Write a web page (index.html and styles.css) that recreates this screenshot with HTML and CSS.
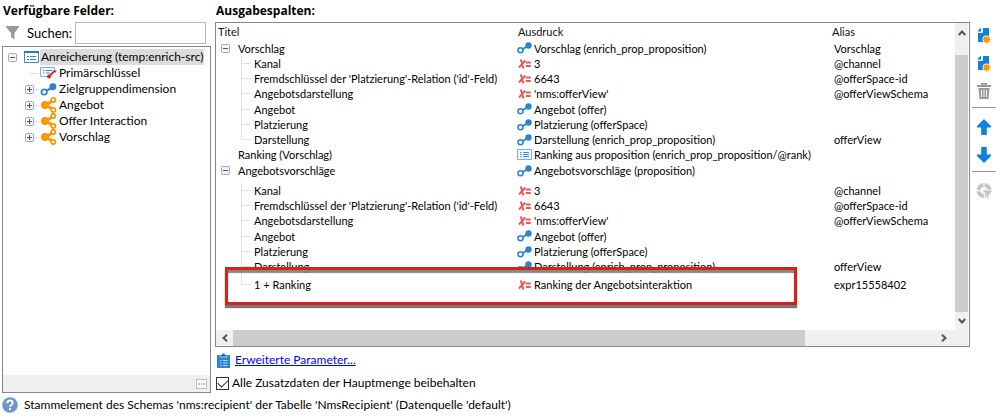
FILE: index.html
```html
<!DOCTYPE html>
<html lang="de">
<head>
<meta charset="utf-8">
<title>Anreicherung</title>
<link rel="stylesheet" href="styles.css">
</head>
<body>
<svg class="defs" aria-hidden="true">
  <symbol id="minus" viewBox="0 0 9 9"><rect x=".5" y=".5" width="8" height="8" rx="1" fill="#f4f4f4" stroke="#a8a8a8"/><path d="M2 4.500h5" stroke="#3c55a8"/></symbol>
  <symbol id="plus" viewBox="0 0 9 9"><rect x=".5" y=".5" width="8" height="8" rx="1" fill="#f4f4f4" stroke="#a8a8a8"/><path d="M2 4.500h5M4.500 2v5" stroke="#3c55a8"/></symbol>
  <symbol id="link" viewBox="0 0 15 12"><path d="M5 7.500 11 4" stroke="#2b84d3" stroke-width="2"/><circle cx="3.500" cy="8.300" r="2.500" fill="#fff" stroke="#2b84d3" stroke-width="1.600"/><circle cx="11.500" cy="3.500" r="3.200" fill="#2b84d3"/></symbol>
  <symbol id="list" viewBox="0 0 15 11"><rect x=".5" y=".5" width="14" height="10" fill="#f4faff" stroke="#78b4e6"/><path d="M3 3.500h1.500M6 3.500h6M3 5.500h1.500M6 5.500h6M3 7.500h1.500M6 7.500h6" stroke="#3b8fdb"/></symbol>
  <symbol id="var" viewBox="0 0 15 12"><path d="M3 2.500h1.300L6 9.500h1.300M8.300 2.500 2 9.500" fill="none" stroke="#e85a5a" stroke-width="1.900"/><path d="M8.800 4.500h5M8.800 8h5" stroke="#e85a5a" stroke-width="1.900"/></symbol>
  <symbol id="schema" viewBox="0 0 15 12"><rect x=".5" y=".5" width="14" height="11" fill="#fff" stroke="#3b8fdb"/><path d="M0 1h15" stroke="#1b7fd4" stroke-width="2"/><path d="M3 5.500h2M6 5.500h6M3 8.500h2M6 8.500h6" stroke="#2b84d3"/></symbol>
  <symbol id="key" viewBox="0 0 17 14"><path d="M14.500 6V1.500H.5v9H8" fill="#f4faff" stroke="#78b4e6"/><path d="M3 4.500h1.500M6 4.500h6M3 7h1.500M6 7h4" stroke="#3b8fdb"/><path d="m8.500 11 6-6 1.500 1" fill="none" stroke="#e02020" stroke-width="1.800"/><circle cx="9" cy="10.500" r="2" fill="#e02020"/></symbol>
  <symbol id="share" viewBox="0 0 17 16"><path d="M5 8.500 13 3.500M5 7.500l8 5" fill="none" stroke="#ff9500" stroke-width="2.800"/><circle cx="5" cy="8" r="4" fill="#ff9500"/><circle cx="13.300" cy="3" r="2.200" fill="#fff" stroke="#ff9500" stroke-width="1.700"/><circle cx="13.300" cy="13" r="2.200" fill="#fff" stroke="#ff9500" stroke-width="1.700"/></symbol>
  <symbol id="new" viewBox="0 0 14 17"><path d="M5 1h7v9.500H7.500L6 15H1V6h4z" fill="#0a84dc"/><path d="M1 4.500V3.500L3.500 1H4v3.500z" fill="#0a84dc"/><path d="M5.500 0v5.500H0" fill="none" stroke="#fff"/><circle cx="9.500" cy="12.500" r="4" fill="#fff"/><path d="M9.500 8.500v8M5.500 12.500h8M6.700 9.700l5.600 5.600M12.300 9.700l-5.600 5.600" stroke="#ff9500" stroke-width="1.300"/><circle cx="9.500" cy="12.500" r="2.700" fill="#ff9500"/></symbol>
  <symbol id="up" viewBox="0 0 14 16"><path d="M7 0l7 7v1.500H9.800V16H4.200V8.500H0V7z" fill="#0a84dc"/></symbol>
</svg>

<div class="app">
  <main class="columns">
    <section class="fields">
      <h2>Verfügbare Felder:</h2>
      <div class="search">
        <svg width="13" height="14" viewBox="0 0 13 14"><path d="M0 0h13v1L8.500 7v6.500L5 11V7L0 1z" fill="#999"/></svg>
        <label for="q">Suchen:</label>
        <input id="q" type="text">
      </div>
      <div class="tree">
        <ul>
          <li class="root"><svg width="9" height="9"><use href="#minus"/></svg><svg class="schema" width="15" height="12"><use href="#schema"/></svg><span class="selected">Anreicherung (temp:enrich-src)</span></li>
          <li><i class="gap"></i><i class="dash"></i><svg width="17" height="14"><use href="#key"/></svg>Primärschlüssel</li>
          <li><svg width="9" height="9"><use href="#plus"/></svg><i class="dash short"></i><svg width="17" height="13"><use href="#link"/></svg>Zielgruppendimension</li>
          <li><svg width="9" height="9"><use href="#plus"/></svg><i class="dash short"></i><svg width="17" height="16"><use href="#share"/></svg>Angebot</li>
          <li><svg width="9" height="9"><use href="#plus"/></svg><i class="dash short"></i><svg width="17" height="16"><use href="#share"/></svg>Offer Interaction</li>
          <li><svg width="9" height="9"><use href="#plus"/></svg><i class="dash short"></i><svg width="17" height="16"><use href="#share"/></svg>Vorschlag</li>
        </ul>
        <div class="tree-foot"><button type="button" aria-label="Mehr"><svg width="11" height="10" viewBox="0 0 11 10"><rect x=".5" y=".5" width="10" height="9" fill="#fff" stroke="#bbb"/><path d="M2 5h2M5 5h1M7 5h2" stroke="#888"/></svg></button></div>
      </div>
    </section>

    <section class="output">
      <h2>Ausgabespalten:</h2>
      <div class="grid">
        <div class="view">
          <table>
            <colgroup><col class="c1"><col class="c2"><col></colgroup>
            <thead><tr><th>Titel</th><th>Ausdruck</th><th>Alias</th></tr></thead>
            <tbody>
              <tr class="group"><td><div class="cell top"><svg width="9" height="9"><use href="#minus"/></svg>Vorschlag</div></td><td><div class="cell"><svg width="15" height="12"><use href="#link"/></svg>Vorschlag (enrich_prop_proposition)</div></td><td>Vorschlag</td></tr>
              <tr><td><div class="cell child"><i class="stem"></i>Kanal</div></td><td><div class="cell"><svg width="15" height="12"><use href="#var"/></svg>3</div></td><td>@channel</td></tr>
              <tr><td><div class="cell child"><i class="stem"></i>Fremdschlüssel der 'Platzierung'-Relation ('id'-Feld)</div></td><td><div class="cell"><svg width="15" height="12"><use href="#var"/></svg>6643</div></td><td>@offerSpace-id</td></tr>
              <tr><td><div class="cell child"><i class="stem"></i>Angebotsdarstellung</div></td><td><div class="cell"><svg width="15" height="12"><use href="#var"/></svg>'nms:offerView'</div></td><td>@offerViewSchema</td></tr>
              <tr class="mid"><td><div class="cell child"><i class="stem"></i>Angebot</div></td><td><div class="cell"><svg width="15" height="12"><use href="#link"/></svg>Angebot (offer)</div></td><td></td></tr>
              <tr><td><div class="cell child"><i class="stem"></i>Platzierung</div></td><td><div class="cell"><svg width="15" height="12"><use href="#link"/></svg>Platzierung (offerSpace)</div></td><td></td></tr>
              <tr><td><div class="cell child"><i class="stem last"></i>Darstellung</div></td><td><div class="cell"><svg width="15" height="12"><use href="#link"/></svg>Darstellung (enrich_prop_proposition)</div></td><td>offerView</td></tr>
              <tr><td><div class="cell plain">Ranking (Vorschlag)</div></td><td><div class="cell"><svg width="15" height="11"><use href="#list"/></svg>Ranking aus proposition (enrich_prop_proposition/@rank)</div></td><td></td></tr>
              <tr class="group tall"><td><div class="cell top"><svg width="9" height="9"><use href="#minus"/></svg>Angebotsvorschläge</div></td><td><div class="cell"><svg width="15" height="12"><use href="#link"/></svg>Angebotsvorschläge (proposition)</div></td><td></td></tr>
              <tr><td><div class="cell child"><i class="stem"></i>Kanal</div></td><td><div class="cell"><svg width="15" height="12"><use href="#var"/></svg>3</div></td><td>@channel</td></tr>
              <tr><td><div class="cell child"><i class="stem"></i>Fremdschlüssel der 'Platzierung'-Relation ('id'-Feld)</div></td><td><div class="cell"><svg width="15" height="12"><use href="#var"/></svg>6643</div></td><td>@offerSpace-id</td></tr>
              <tr><td><div class="cell child"><i class="stem"></i>Angebotsdarstellung</div></td><td><div class="cell"><svg width="15" height="12"><use href="#var"/></svg>'nms:offerView'</div></td><td>@offerViewSchema</td></tr>
              <tr class="mid"><td><div class="cell child"><i class="stem"></i>Angebot</div></td><td><div class="cell"><svg width="15" height="12"><use href="#link"/></svg>Angebot (offer)</div></td><td></td></tr>
              <tr><td><div class="cell child"><i class="stem"></i>Platzierung</div></td><td><div class="cell"><svg width="15" height="12"><use href="#link"/></svg>Platzierung (offerSpace)</div></td><td></td></tr>
              <tr><td><div class="cell child"><i class="stem"></i>Darstellung</div></td><td><div class="cell"><svg width="15" height="12"><use href="#link"/></svg>Darstellung (enrich_prop_proposition)</div></td><td>offerView</td></tr>
              <tr class="rank"><td><div class="cell child"><i class="stem last"></i>1 + Ranking</div></td><td><div class="cell"><svg width="15" height="12"><use href="#var"/></svg>Ranking der Angebotsinteraktion</div></td><td>expr15558402</td></tr>
            </tbody>
          </table>
          <div class="marker"></div>
        </div>
        <div class="vbar">
          <button type="button" aria-label="Nach oben blättern"><svg width="8" height="6" viewBox="0 0 8 6"><path d="M.8 5 4 1.500 7.200 5" fill="none" stroke="#555" stroke-width="2"/></svg></button>
          <div class="vthumb"></div>
          <button type="button" aria-label="Nach unten blättern"><svg width="8" height="6" viewBox="0 0 8 6"><path d="M.8 1 4 4.500 7.200 1" fill="none" stroke="#555" stroke-width="2"/></svg></button>
        </div>
        <div class="hbar">
          <button type="button" aria-label="Nach links blättern"><svg width="6" height="8" viewBox="0 0 6 8"><path d="M5 .8 1.500 4 5 7.200" fill="none" stroke="#555" stroke-width="2"/></svg></button>
          <div class="hthumb"></div>
          <button type="button" aria-label="Nach rechts blättern"><svg width="6" height="8" viewBox="0 0 6 8"><path d="M1 .8 4.500 4 1 7.200" fill="none" stroke="#555" stroke-width="2"/></svg></button>
        </div>
      </div>
      <div class="advanced">
        <svg width="13" height="16" viewBox="0 0 13 16"><path d="M0 3h13v13H0z" fill="#2b84d3"/><path d="M3 2.500h2a1.500 1.500 0 0 1 3 0h2V5H3z" fill="#1c6fba" stroke="#fff" stroke-width=".6"/><path d="M3 8.500h1.500M6 8.500h4.500M3 11h1.500M6 11h4.500M3 13.500h1.500M6 13.500h4.500" stroke="#b7dcfa"/></svg>
        <a href="#">Erweiterte Parameter...</a>
      </div>
      <label class="keep"><input type="checkbox" checked>Alle Zusatzdaten der Hauptmenge beibehalten</label>
    </section>

    <nav class="tools">
      <button type="button" aria-label="Hinzufügen"><svg width="14" height="17"><use href="#new"/></svg></button>
      <button type="button" aria-label="Ausdruck hinzufügen"><svg width="14" height="17"><use href="#new"/></svg></button>
      <button type="button" aria-label="Löschen"><svg width="14" height="16" viewBox="0 0 14 16"><path d="M5 2V.8h4V2" fill="none" stroke="#8c8c8c" stroke-width="1.500"/><path d="M0 2h14v2H0zM1.500 5h11l-1 11h-9z" fill="#999"/><path d="M4.500 7v7M7 7v7M9.500 7v7" stroke="#fff"/></svg></button>
      <hr>
      <button type="button" aria-label="Nach oben"><svg width="14" height="16"><use href="#up"/></svg></button>
      <button type="button" aria-label="Nach unten"><svg class="flip" width="14" height="16"><use href="#up"/></svg></button>
      <hr>
      <button type="button" aria-label="Filter"><svg width="16" height="16" viewBox="0 0 16 16"><circle cx="8" cy="7.500" r="5.500" fill="none" stroke="#c4c4c4" stroke-width="4" stroke-dasharray="7.500 1.140"/><path d="M6.500 7H16v1.500L13 12v4l-2.500-1.500V12L6.500 8z" fill="#c4c4c4" stroke="#fff" stroke-width=".8"/></svg></button>
    </nav>
  </main>
  <footer class="status">
    <svg width="16" height="16" viewBox="0 0 16 16"><circle cx="8" cy="8" r="7.800" fill="#6b96d2"/><path d="M5.300 6.200C5.300 4.300 6.500 3.500 8 3.500s2.700.9 2.700 2.400C10.700 7.800 8 7.800 8 9.900" fill="none" stroke="#fff" stroke-width="1.800"/><circle cx="8" cy="12.200" r="1.100" fill="#fff"/></svg>
    <span>Stammelement des Schemas 'nms:recipient' der Tabelle 'NmsRecipient' (Datenquelle 'default')</span>
  </footer>
</div>
</body>
</html>
```

FILE: styles.css
```css
* { box-sizing: border-box; }
body { margin: 0; background: #fff; color: #000; font: 12px/16px Lato, "Noto Sans", sans-serif; white-space: nowrap; }
svg { display: block; flex: none; }
.defs { position: absolute; width: 0; height: 0; }
button { display: flex; align-items: center; justify-content: center; margin: 0; padding: 0; border: 0; background: none; flex: none; }
h2 { margin: 0; font: 700 12px/16px "Open Sans", "Noto Sans", sans-serif; }
.app { min-height: 100vh; padding: 3px 4px 0 2px; }
.columns { display: grid; grid-template-columns: 209px minmax(0, 1fr) 26px; }

.fields { display: flex; flex-direction: column; }
.fields h2 { padding-left: 1px; }
.search { display: flex; align-items: center; height: 27px; padding: 0 5px 0 4px; }
.search label { width: 48px; margin-left: 8px; font-size: 13px; }
.search input { flex: 1; min-width: 0; height: 22px; border: 1px solid #b4b8c4; background: #fff; }
.tree { flex: 1; display: flex; flex-direction: column; border: 1px solid #828790; }
.tree ul { flex: 1; margin: 0; padding: 2px 0 0; list-style: none; }
.tree li { display: flex; align-items: center; height: 16px; padding-left: 22px; }
.tree li.root { padding-left: 5px; }
.tree li > svg:last-of-type { margin-right: 2px; }
.schema { margin-left: 7px; }
.selected { background: #dcdcdc; padding: 0 1px; margin-left: -1px; }
.gap { width: 5px; }
.dash { width: 9px; height: 1px; margin-right: 1px; background: #ddd; }
.dash.short { width: 5px; }
.tree-foot { display: flex; justify-content: flex-end; align-items: center; height: 17px; padding-right: 3px; background: #efefef; }

.output { padding-left: 4px; }
.output h2 { padding-left: 1px; }
.grid { display: grid; grid-template-columns: minmax(0, 1fr) 13px; grid-template-rows: auto 16px; margin-top: 3px; padding: 0 1px 0 0; border: 1px solid #828790; }
.view { position: relative; min-height: 307px; font-size: 11px; line-height: 15px; }
table { width: 100%; table-layout: fixed; border-collapse: collapse; }
.c1 { width: 301px; }
.c2 { width: 315px; }
th { height: 17px; padding: 0 0 0 2px; text-align: left; font-weight: 400; color: #111; }
th + th { padding-left: 1px; }
th:last-child { padding-left: 0; }
td { height: 15px; padding: 0; color: #000; }
td:last-child { padding-left: 2px; }
.cell { display: flex; align-items: center; height: 15px; }
td + td .cell svg { margin-right: 2px; }
.top { padding-left: 5px; gap: 8px; }
.plain { padding-left: 22px; }
.child { padding-left: 25px; }
.stem { align-self: stretch; width: 10px; margin-right: 3px; border-left: 1px solid #e2e2e2; background: linear-gradient(#e2e2e2, #e2e2e2) center / 100% 1px no-repeat; }
.stem.last { height: 8px; background-position: bottom; }
.group td { height: 16px; }
.tall td { height: 21px; vertical-align: top; }
.tall .cell { height: 17px; }
.mid td, .mid .cell { height: 16px; }
.rank td, .rank .cell { height: 21px; }
.rank .stem.last { height: 11px; }
.marker { position: absolute; left: 9px; top: 244px; width: 572px; height: 38px; border: 3px solid #d62314; box-shadow: 0 3px 1px #777, inset 0 3px 1px #888; }

.vbar { display: flex; flex-direction: column; background: #f0f0f0; }
.vbar button:first-child { height: 19px; margin-bottom: 13px; }
.vbar button:last-child { height: 18px; }
.vthumb { flex: 1; background: #cdcdcd; }
.hbar { grid-column: 1 / -1; display: flex; background: #f0f0f0; }
.hbar button { width: 17px; }
.hbar button:last-child { margin: 0 16px 0 auto; }
.hthumb { width: 76%; background: #cdcdcd; }

.advanced { display: flex; align-items: center; gap: 5px; height: 26px; padding-left: 2px; }
.advanced a { color: #00f; }
.keep { display: flex; align-items: center; gap: 3px; height: 20px; padding-left: 1px; }
.keep input { appearance: none; width: 13px; height: 13px; margin: 0; border: 1px solid #333; background: #fff; display: grid; place-items: center; }
.keep input:checked::before { content: ""; width: 9px; height: 5px; border: solid #333; border-width: 0 0 1px 1px; transform: rotate(-45deg); margin-bottom: 3px; }

.tools { display: flex; flex-direction: column; align-items: center; padding-top: 18px; margin-left: 2px; }
.tools button { width: 23px; height: 28px; }
.tools hr { width: 100%; height: 1px; margin: 2px 0 5px; border: 0; background: #999; flex: none; }
.flip { transform: scaleY(-1); }
.status { display: flex; align-items: center; gap: 6px; height: 24px; }
```
